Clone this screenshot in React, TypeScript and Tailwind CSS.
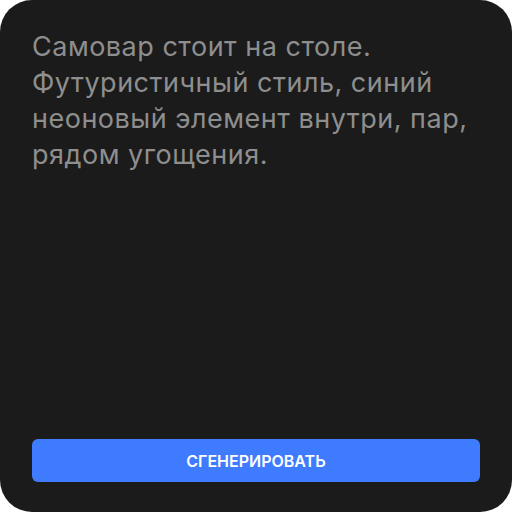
export default function App() {
  return (
    <div className="w-[512px] h-[512px] bg-white">
      <div className="w-full h-full bg-[#1b1b1b] rounded-[32px] flex flex-col px-8 pt-[29px] pb-[30px]" style={{ fontFamily: 'Inter, "Noto Sans", sans-serif' }}>
        <p className="text-[27px] leading-[36px] text-[#8e8e8e] tracking-[0.5px]">
          Самовар стоит на столе. Футуристичный стиль, синий неоновый элемент внутри, пар, рядом угощения.
        </p>
        <div className="flex-1" />
        <button className="h-[43px] w-full rounded-[6px] bg-[#3e7bff] text-white text-[16px] font-semibold uppercase">
          Сгенерировать
        </button>
      </div>
    </div>
  );
}
